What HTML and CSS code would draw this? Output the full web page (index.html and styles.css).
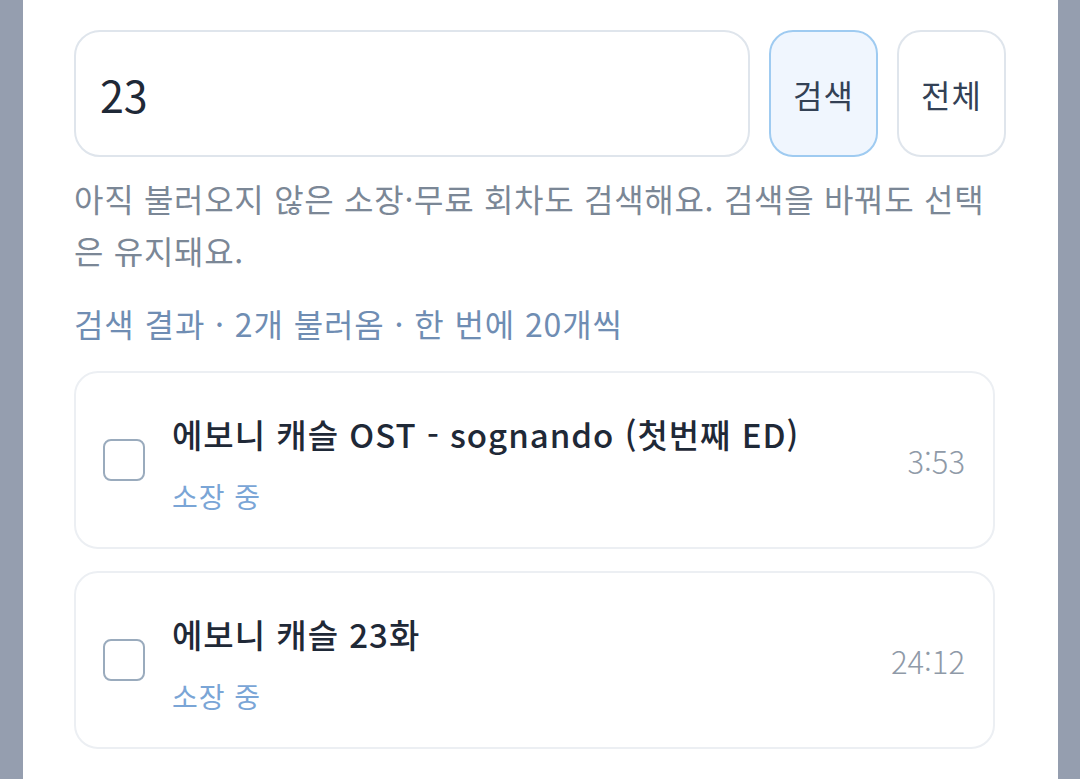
FILE: index.html
```html
<!DOCTYPE html>
<html lang="ko">
<head>
    <meta charset="UTF-8">
    <meta name="viewport" content="width=device-width, initial-scale=1.0">
    <title>회차 검색</title>
    <link rel="stylesheet" href="styles.css">
</head>
<body>
    <div class="panel">
        <div class="search-row">
            <input type="text" class="search-input" value="23">
            <button class="btn btn-primary">검색</button>
            <button class="btn">전체</button>
        </div>
        <p class="help">아직 불러오지 않은 소장·무료 회차도 검색해요. 검색을 바꿔도 선택은 유지돼요.</p>
        <div class="result-info">검색 결과 · 2개 불러옴 · 한 번에 20개씩</div>

        <div class="list">
            <label class="item">
                <input type="checkbox" class="check">
                <div class="item-body">
                    <div class="item-title">에보니 캐슬 OST - sognando (첫번째 ED)</div>
                    <div class="item-sub">소장 중</div>
                </div>
                <div class="item-time">3:53</div>
            </label>
            <label class="item">
                <input type="checkbox" class="check">
                <div class="item-body">
                    <div class="item-title">에보니 캐슬 23화</div>
                    <div class="item-sub">소장 중</div>
                </div>
                <div class="item-time">24:12</div>
            </label>
        </div>
    </div>
</body>
</html>
```

FILE: styles.css
```css
body {
    margin: 0;
    background-color: #959eaf;
    font-family: "Noto Sans CJK KR", "Noto Sans", sans-serif;
    color: #1f2937;
}
.panel {
    background: white;
    margin: 0 22px 0 23px;
    min-height: 100vh;
    padding: 30px 52px 0 51px;
    box-sizing: border-box;
}
.search-row {
    display: flex;
    gap: 19px;
    height: 127px;
}
.search-input {
    flex: 1;
    min-width: 0;
    border: 2px solid #dfe5ec;
    border-radius: 26px;
    padding: 0 24px;
    font-family: inherit;
    font-size: 43px;
    color: #1f2937;
    outline: none;
}
.btn {
    width: 109px;
    flex: none;
    background: white;
    border: 2px solid #dfe5ec;
    border-radius: 24px;
    font-family: inherit;
    font-size: 32px;
    letter-spacing: 1px;
    color: #334155;
    padding: 0;
    cursor: pointer;
}
.btn-primary {
    background: #f0f6fe;
    border-color: #9fcbf1;
}
.help {
    margin: 15px 0 0;
    font-size: 32px;
    letter-spacing: 0.7px;
    line-height: 52px;
    color: #7b8796;
}
.result-info {
    margin-top: 21px;
    font-size: 32px;
    letter-spacing: 0.9px;
    line-height: 52px;
    color: #6f8db3;
}
.list {
    display: flex;
    flex-direction: column;
    gap: 22px;
    margin-top: 22px;
    margin-right: 11px;
}
.item {
    display: flex;
    align-items: center;
    height: 178px;
    box-sizing: border-box;
    border: 2px solid #eceff3;
    border-radius: 24px;
    padding: 0 28px 0 27px;
}
.check {
    appearance: none;
    width: 42px;
    height: 42px;
    margin: 0 27px 0 0;
    border: 2px solid #9aabbd;
    border-radius: 8px;
    flex: none;
}
.item-body {
    flex: 1;
    min-width: 0;
}
.item-title {
    font-size: 33px;
    font-weight: 500;
    letter-spacing: 1px;
    line-height: 46px;
    color: #1f2937;
    margin-top: 8px;
}
.item-sub {
    font-size: 28px;
    letter-spacing: 1px;
    line-height: 42px;
    color: #7aa5d6;
    margin-top: 18px;
}
.item-time {
    font-size: 31px;
    font-weight: 300;
    color: #8f9aa8;
    flex: none;
}
```
